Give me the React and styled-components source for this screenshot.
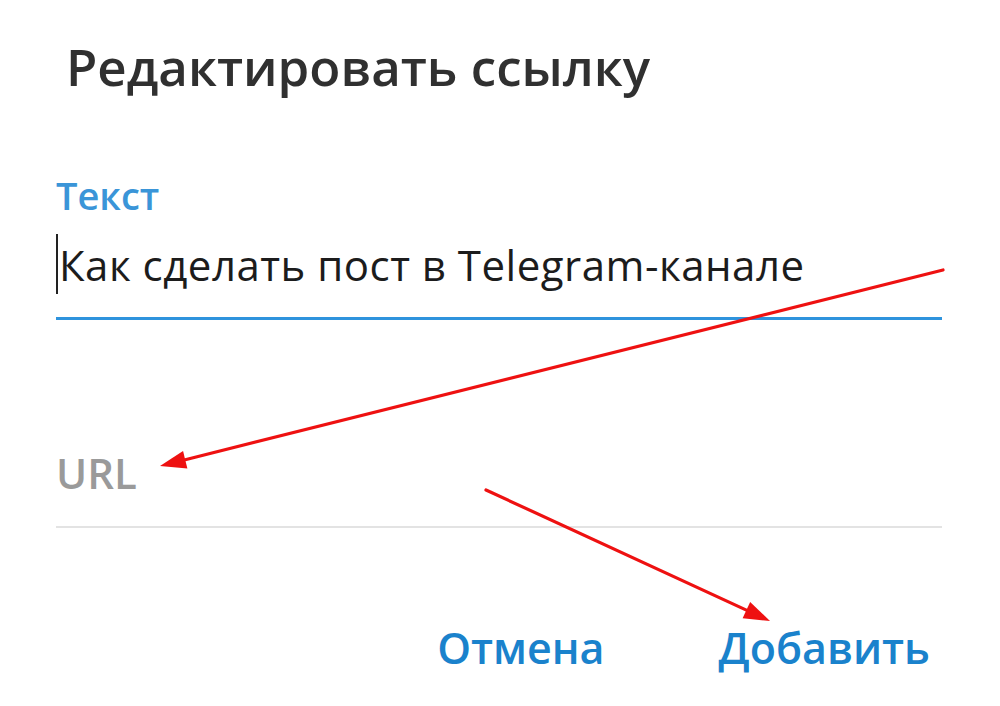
import React from "react";
import styled, { createGlobalStyle } from "styled-components";

const GlobalStyle = createGlobalStyle`
  html, body {
    margin: 0;
    padding: 0;
    background: #ffffff;
  }
  body {
    font-family: "Open Sans", "Noto Sans", sans-serif;
  }
`;

const Page = styled.div`
  position: relative;
  width: 1000px;
  height: 706px;
  overflow: hidden;
  background: #fff;
`;

const Dialog = styled.div`
  display: flex;
  flex-direction: column;
  padding: 32px 58px 0 56px;
`;

const Title = styled.h1`
  margin: 0 0 0 10px;
  font-size: 51px;
  font-weight: 600;
  line-height: 1.362;
  color: #303030;
`;

const Field = styled.div`
  display: flex;
  flex-direction: column;
  margin-top: ${(p) => p.$top}px;
`;

const Label = styled.div`
  font-size: 38px;
  font-weight: 600;
  line-height: 1.362;
  color: #3a95d8;
`;

const InputRow = styled.div`
  display: flex;
  align-items: center;
  margin-top: ${(p) => p.$top || 0}px;
  font-size: 42px;
  line-height: 1.362;
  letter-spacing: ${(p) => (p.$placeholder ? 0 : 0.5)}px;
  color: ${(p) => (p.$placeholder ? "#9a9a9a" : "#1c1c1c")};
  font-weight: ${(p) => (p.$placeholder ? 600 : 400)};
`;

const Caret = styled.span`
  width: 2px;
  height: 60px;
  margin-right: 1px;
  background: #222;
`;

const Underline = styled.div`
  height: ${(p) => (p.$active ? 3 : 2)}px;
  margin-top: ${(p) => p.$gap}px;
  background: ${(p) => (p.$active ? "#2e93dd" : "#e3e3e3")};
`;

const Buttons = styled.div`
  display: flex;
  justify-content: flex-end;
  gap: 114px;
  margin-top: 91px;
  padding-right: 12px;
`;

const TextButton = styled.button`
  border: 0;
  padding: 0;
  background: none;
  font-family: inherit;
  font-size: 43px;
  font-weight: 600;
  line-height: 1.362;
  color: #1a82cc;
  cursor: pointer;
`;

const Annotations = styled.svg`
  position: absolute;
  inset: 0;
  pointer-events: none;
`;

function Arrow({ x1, y1, x2, y2 }) {
  const ang = Math.atan2(y2 - y1, x2 - x1);
  const len = 26;
  const half = 9;
  const bx = x2 - Math.cos(ang) * len;
  const by = y2 - Math.sin(ang) * len;
  const px = -Math.sin(ang) * half;
  const py = Math.cos(ang) * half;
  return (
    <g>
      <line x1={x1} y1={y1} x2={bx} y2={by} stroke="#ee1111" strokeWidth="3.2" strokeLinecap="round" />
      <polygon
        points={`${x2},${y2} ${bx + px},${by + py} ${bx - px},${by - py}`}
        fill="#ee1111"
      />
    </g>
  );
}

export default function App() {
  return (
    <Page>
      <GlobalStyle />
      <Dialog>
        <Title>Редактировать ссылку</Title>

        <Field $top={69}>
          <Label>Текст</Label>
          <InputRow $top={12}>
            <Caret />
            Как сделать пост в Telegram-канале
          </InputRow>
          <Underline $active $gap={23} />
        </Field>

        <Field $top={124}>
          <InputRow $placeholder>URL</InputRow>
          <Underline $gap={25} />
        </Field>

        <Buttons>
          <TextButton>Отмена</TextButton>
          <TextButton>Добавить</TextButton>
        </Buttons>
      </Dialog>

      <Annotations width="1000" height="706" viewBox="0 0 1000 706">
        <Arrow x1={943} y1={270} x2={160} y2={466} />
        <Arrow x1={486} y1={490} x2={770} y2={621} />
      </Annotations>
    </Page>
  );
}
